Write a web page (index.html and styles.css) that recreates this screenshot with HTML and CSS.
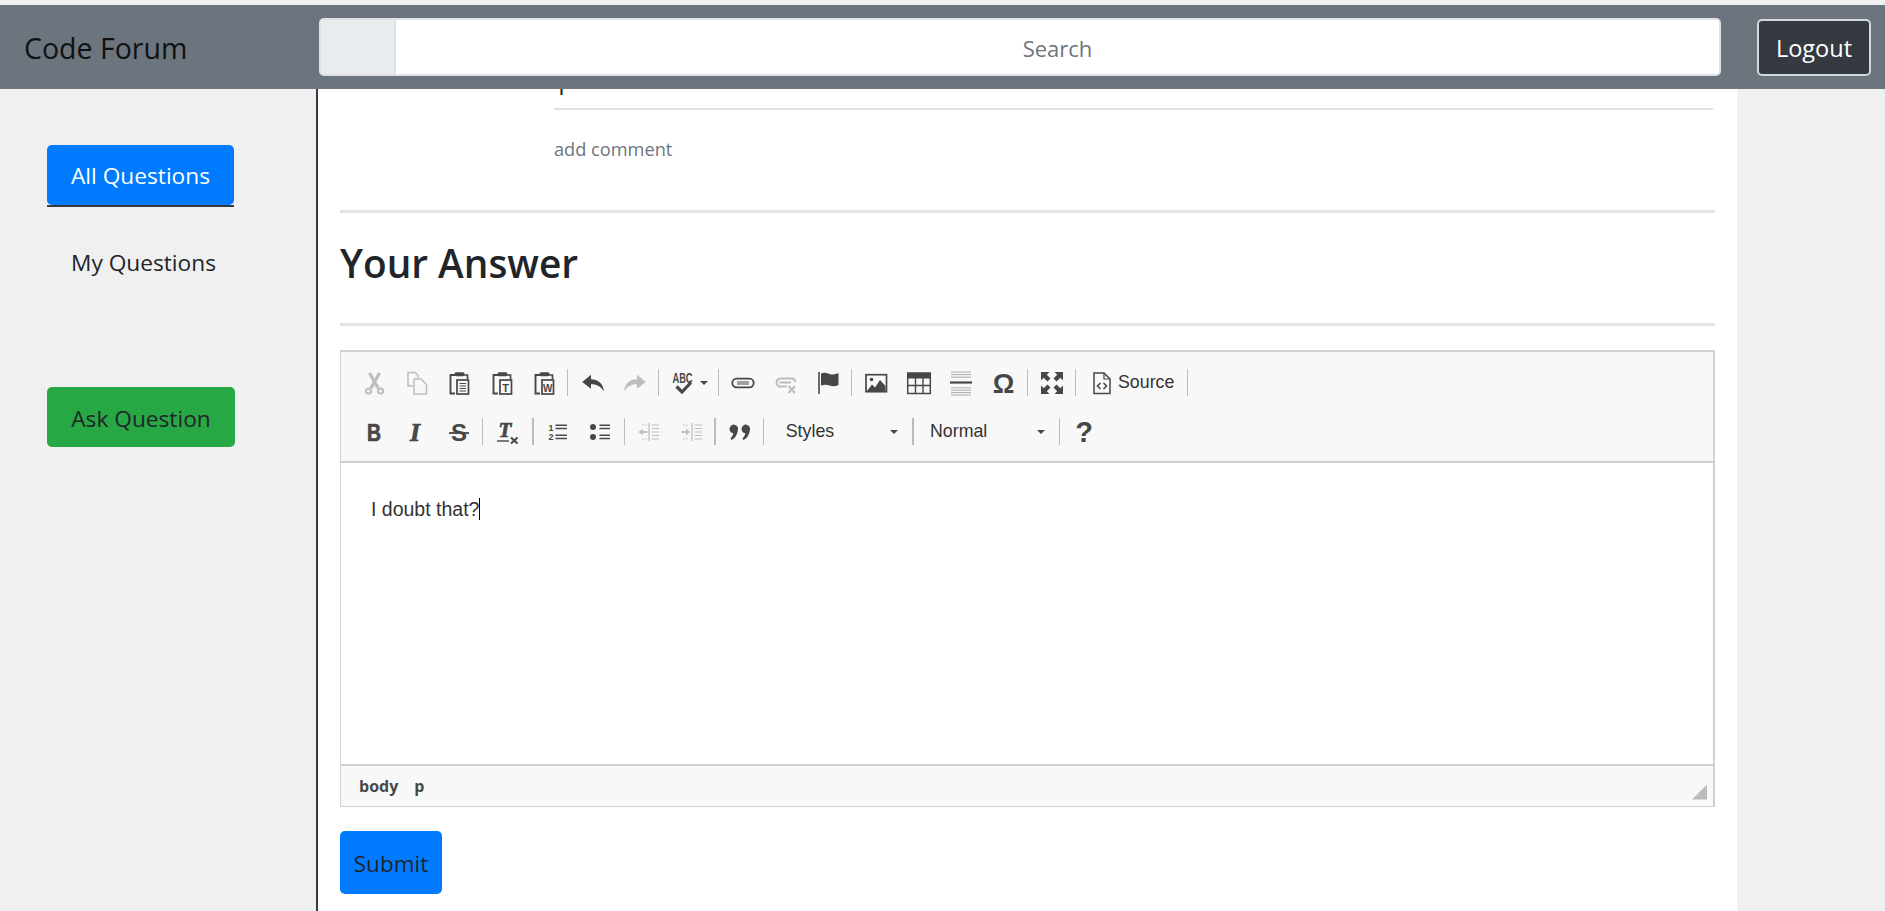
FILE: index.html
```html
<!DOCTYPE html>
<html lang="en">
<head>
<meta charset="utf-8">
<title>Code Forum</title>
<link rel="stylesheet" href="styles.css">
</head>
<body>
<svg class="defs" width="0" height="0" aria-hidden="true">
  <defs>
    <symbol id="clip" viewBox="0 0 24 24">
      <path d="M8 4H3.5V22.5H8" fill="none" stroke="currentColor" stroke-width="1.9"/>
      <rect x="7.5" y="1.2" width="10" height="4" rx="1.6" fill="currentColor"/>
      <path d="M17 4H20.5V8" fill="none" stroke="currentColor" stroke-width="1.7"/>
      <rect x="10" y="9" width="11.5" height="14" fill="none" stroke="currentColor" stroke-width="1.7"/>
    </symbol>
  </defs>
</svg>
<header class="navbar">
  <div class="brand">Code Forum</div>
  <form class="search">
    <span class="search-addon"></span>
    <input class="search-input" type="text" placeholder="Search">
  </form>
  <button class="logout" type="button">Logout</button>
</header>
<div class="page">
  <aside class="sidebar">
    <div class="side-item"><a class="side-btn side-active">All Questions</a></div>
    <a class="side-link">My Questions</a>
    <a class="side-btn side-ask">Ask Question</a>
  </aside>
  <main class="content">
    <div class="comments">
      <div class="tick"></div>
      <hr class="rule-thin">
      <a class="add-comment">add comment</a>
    </div>
    <hr class="rule">
    <h2 class="answer-title">Your Answer</h2>
    <hr class="rule">
    <section class="editor">
      <div class="toolbar">
        <div class="tb-row">
          <span class="tb off"><svg class="ic" viewBox="0 0 24 24"><path d="M7.5 2L16 17M17.5 2L9 17" stroke="currentColor" stroke-width="3.2" fill="none"/><circle cx="6.5" cy="20" r="2.6" stroke="currentColor" stroke-width="2" fill="none"/><circle cx="18.5" cy="20" r="2.6" stroke="currentColor" stroke-width="2" fill="none"/></svg></span>
          <span class="tb off"><svg class="ic" viewBox="0 0 24 24"><path d="M8 15H3V1.5H10L13 4.5V7M9 8H16L21.5 13.5V23H9Z" stroke="currentColor" stroke-width="1.5" fill="none"/></svg></span>
          <span class="tb"><svg class="ic" viewBox="0 0 24 24"><use href="#clip"/><path d="M12.5 12.5H19M12.5 15H19M12.5 17.5H19M12.5 20H19" stroke="currentColor" stroke-width="1.2"/></svg></span>
          <span class="tb"><svg class="ic" viewBox="0 0 24 24"><use href="#clip"/><text class="ic-t ic-b" x="15.7" y="20.5" font-size="11" text-anchor="middle">T</text></svg></span>
          <span class="tb"><svg class="ic" viewBox="0 0 24 24"><use href="#clip"/><text class="ic-t ic-b" x="15.7" y="20.5" font-size="10" text-anchor="middle">W</text></svg></span>
          <i class="sep"></i>
          <span class="tb"><svg class="ic" viewBox="0 0 24 24"><path d="M10 3.7L1.2 11L10 17.8V13.3C15 13.3 19 14.8 23 20.3C22.3 12.5 17 8.2 10 8.2Z" fill="currentColor"/></svg></span>
          <span class="tb off"><svg class="ic" viewBox="0 0 24 24"><path d="M14 3.7L22.8 11L14 17.8V13.3C9 13.3 5 14.8 1 20.3C1.7 12.5 7 8.2 14 8.2Z" fill="currentColor"/></svg></span>
          <i class="sep"></i>
          <span class="tb tb-spell"><svg class="ic" viewBox="0 0 24 24"><text class="ic-t ic-b" x="11.5" y="12" font-size="15" text-anchor="middle" textLength="20" lengthAdjust="spacingAndGlyphs">ABC</text><path d="M5.5 15.5L11 21L20 11.5" stroke="currentColor" stroke-width="3.2" fill="none"/></svg><b class="caret"></b></span>
          <i class="sep"></i>
          <span class="tb"><svg class="ic" viewBox="0 0 24 24"><rect x="1.3" y="7.7" width="21.4" height="8.6" rx="4.3" stroke="currentColor" stroke-width="1.8" fill="none"/><path d="M6 11H18M6 13H18" stroke="currentColor" stroke-width="1.2"/></svg></span>
          <span class="tb off"><svg class="ic" viewBox="0 0 24 24"><path d="M13 15.5H5.5A4.2 4.2 0 0 1 5.5 7.5H17.5A4.2 4.2 0 0 1 21.5 11M5.5 11.5H17" stroke="currentColor" stroke-width="1.9" fill="none"/><path d="M14.5 15L21 22M21 15L14.5 22" stroke="currentColor" stroke-width="2"/></svg></span>
          <span class="tb"><svg class="ic" viewBox="0 0 24 24"><path d="M3 1V23" stroke="currentColor" stroke-width="1.6"/><path d="M5 2.5C8 1 11 2 13.5 3C16 4 19 3.5 22.5 2V14C19 15.5 16 15.5 13.5 14.5C11 13.5 8 13.5 5 14.5Z" fill="currentColor"/></svg></span>
          <i class="sep"></i>
          <span class="tb"><svg class="ic" viewBox="0 0 24 24"><rect x="2" y="3.7" width="20.5" height="17" stroke="currentColor" stroke-width="1.7" fill="none"/><path d="M3 20L8 13.5L11 16.5L16 9L21.5 15V20Z" fill="currentColor"/><circle cx="7.5" cy="8.5" r="1.8" fill="currentColor"/></svg></span>
          <span class="tb"><svg class="ic" viewBox="0 0 24 24"><rect x="0.7" y="2" width="22.6" height="20.5" stroke="currentColor" stroke-width="1.5" fill="none"/><rect x="0.7" y="2" width="22.6" height="5.5" fill="currentColor"/><path d="M8.5 7V22M16 7V22M1 14.5H23" stroke="currentColor" stroke-width="1.4"/></svg></span>
          <span class="tb"><svg class="ic" viewBox="0 0 24 24"><path d="M2 1H22M2 3.6H22M2 6.2H22M2 16.8H22M2 19.2H22M2 21.6H22M2 24H22" stroke="currentColor" stroke-width=".8" opacity=".55"/><path d="M1 11.5H23" stroke="currentColor" stroke-width="2.2"/></svg></span>
          <span class="tb"><svg class="ic" viewBox="0 0 24 24"><text class="ic-t ic-b" x="11.5" y="22" font-size="27" text-anchor="middle">Ω</text></svg></span>
          <i class="sep"></i>
          <span class="tb"><svg class="ic" viewBox="0 0 24 24"><path d="M1 1H9.5L6.8 3.7L10.5 7.5L7.5 10.5L3.7 6.8L1 9.5Z" fill="currentColor"/><path d="M23 1H14.5L17.2 3.7L13.5 7.5L16.5 10.5L20.3 6.8L23 9.5Z" fill="currentColor"/><path d="M1 23H9.5L6.8 20.3L10.5 16.5L7.5 13.5L3.7 17.2L1 14.5Z" fill="currentColor"/><path d="M23 23H14.5L17.2 20.3L13.5 16.5L16.5 13.5L20.3 17.2L23 14.5Z" fill="currentColor"/></svg></span>
          <i class="sep"></i>
          <span class="tb tb-source"><svg class="ic" viewBox="0 0 24 24"><path d="M4 2H14L20 8V22.5H4Z" stroke="currentColor" stroke-width="1.5" fill="none"/><path d="M14 2V8H20" stroke="currentColor" stroke-width="1.2" fill="none"/><path d="M10.5 12L7.5 15L10.5 18M13.5 12L16.5 15L13.5 18" stroke="currentColor" stroke-width="1.6" fill="none"/></svg><span class="tb-label">Source</span></span>
          <i class="sep"></i>
        </div>
        <div class="tb-row">
          <span class="tb"><svg class="ic" viewBox="0 0 24 24"><text class="ic-t ic-b ic-heavy" x="12" y="20.5" font-size="24" text-anchor="middle" textLength="14" lengthAdjust="spacingAndGlyphs">B</text></svg></span>
          <span class="tb"><svg class="ic" viewBox="0 0 24 24"><text class="ic-s ic-heavy" x="10" y="21" font-size="26" text-anchor="middle">I</text></svg></span>
          <span class="tb"><svg class="ic" viewBox="0 0 24 24"><text class="ic-t ic-b" x="12" y="21" font-size="24" text-anchor="middle">S</text><path d="M2 13H22" stroke="currentColor" stroke-width="1.8"/></svg></span>
          <i class="sep"></i>
          <span class="tb tb-tx"><svg class="ic" viewBox="0 0 24 24"><text class="ic-s ic-heavy" x="9" y="17" font-size="21" text-anchor="middle">T</text><path d="M1 21H13" stroke="currentColor" stroke-width="1.4"/><path d="M15 17.5L21.5 23.5M21.5 17.5L15 23.5" stroke="currentColor" stroke-width="2"/></svg></span>
          <i class="sep"></i>
          <span class="tb tb-wide tb-list-first"><svg class="ic" viewBox="0 0 24 24"><text class="ic-t ic-b" x="7" y="10.5" font-size="9" text-anchor="middle">1</text><text class="ic-t ic-b" x="7" y="20" font-size="9" text-anchor="middle">2</text><path d="M11.5 5.3H23M11.5 8.5H23M11.5 15.3H23M11.5 18.5H23" stroke="currentColor" stroke-width="1.5"/></svg></span>
          <span class="tb tb-wide"><svg class="ic" viewBox="0 0 24 24"><circle cx="5" cy="7" r="3" fill="currentColor"/><circle cx="5" cy="17" r="3" fill="currentColor"/><path d="M11.5 5.3H22M11.5 8.5H22M11.5 15.3H22M11.5 18.5H22" stroke="currentColor" stroke-width="1.5"/></svg></span>
          <i class="sep"></i>
          <span class="tb off"><svg class="ic" viewBox="0 0 24 24"><path d="M12 3V21" stroke="currentColor" stroke-width="1.3"/><path d="M1.5 12L6 8.7V11H10.5V13H6V15.3Z" fill="currentColor"/><path d="M5 5H10M5 19H10" stroke="currentColor" stroke-width="1.2" stroke-dasharray="1.5 1.5"/><path d="M14.5 5H22M14.5 8.5H22M14.5 12H22M14.5 15.5H22M14.5 19H22" stroke="currentColor" stroke-width="1.2"/></svg></span>
          <span class="tb off"><svg class="ic" viewBox="0 0 24 24"><path d="M12 3V21" stroke="currentColor" stroke-width="1.3"/><path d="M10.5 12L6 8.7V11H1.5V13H6V15.3Z" fill="currentColor"/><path d="M3 5H8M3 19H8" stroke="currentColor" stroke-width="1.2" stroke-dasharray="1.5 1.5"/><path d="M14.5 5H22M14.5 8.5H22M14.5 12H22M14.5 15.5H22M14.5 19H22" stroke="currentColor" stroke-width="1.2"/></svg></span>
          <i class="sep"></i>
          <span class="tb"><svg class="ic" viewBox="0 0 24 24"><path d="M1.5 9A4.3 4.3 0 1 1 9.8 10.5C9.3 14.5 7 18.5 3.5 20L2.5 18.5C4 17 5 15.3 5.3 13.3C3 13 1.5 11.3 1.5 9Z" fill="currentColor"/><path d="M13.5 9A4.3 4.3 0 1 1 21.8 10.5C21.3 14.5 19 18.5 15.5 20L14.5 18.5C16 17 17 15.3 17.3 13.3C15 13 13.5 11.3 13.5 9Z" fill="currentColor"/></svg></span>
          <i class="sep"></i>
          <span class="combo combo-styles"><span>Styles</span><b class="caret"></b></span>
          <i class="sep"></i>
          <span class="combo combo-format"><span>Normal</span><b class="caret"></b></span>
          <i class="sep"></i>
          <span class="tb"><svg class="ic" viewBox="0 0 24 24"><text class="ic-t ic-b" x="12" y="22" font-size="29" text-anchor="middle">?</text></svg></span>
        </div>
      </div>
      <div class="editor-body"><p class="editor-text"><span class="typed">I doubt that?</span></p></div>
      <div class="pathbar">
        <span class="path-items"><span>body</span><span>p</span></span>
        <i class="resizer"></i>
      </div>
    </section>
    <button class="submit" type="button">Submit</button>
  </main>
  <div class="gutter"></div>
</div>
</body>
</html>
```

FILE: styles.css
```css
* { box-sizing: border-box; }
html, body { margin: 0; height: 100%; }
body {
  height: 911px;
  overflow: hidden;
  display: flex;
  flex-direction: column;
  padding-top: 5px;
  background: #f0f0f0;
  font-family: "Open Sans", "Noto Sans", sans-serif;
  color: #212529;
}
.defs { position: absolute; }

.navbar {
  flex: none;
  height: 84px;
  display: flex;
  align-items: center;
  background: #6c757d;
  padding: 0 14px 0 24px;
}
.brand { width: 295px; padding-top: 1px; font-size: 28.5px; color: #111; }
.search {
  width: 1402px;
  height: 58px;
  display: flex;
  border: 2px solid #dee2e6;
  border-radius: 5px;
  overflow: hidden;
  background: #fff;
}
.search-addon { width: 75px; background: #e9ecef; border-right: 2px solid #dee2e6; }
.search-input {
  flex: 1;
  border: 0;
  outline: 0;
  padding: 2px 0 0;
  text-align: center;
  font: 22px "Open Sans", sans-serif;
  color: #495057;
}
.search-input::placeholder { color: #6c757d; opacity: 1; }
.logout {
  margin-left: 36px;
  width: 114px;
  height: 57px;
  background: #343a40;
  color: #fff;
  border: 2px solid #d5d8db;
  border-radius: 5px;
  font: 23.5px "Open Sans", sans-serif;
  padding: 1px 0 0;
}

.page { flex: 1; display: flex; min-height: 0; }
.sidebar {
  flex: none;
  width: 318px;
  border-right: 2px solid #343a40;
  padding: 56px 0 0 47px;
  display: flex;
  flex-direction: column;
  align-items: flex-start;
  font-size: 22.7px;
}
.side-item { border-bottom: 2px solid #343a40; }
.side-btn {
  display: flex;
  align-items: center;
  justify-content: center;
  width: 188px;
  height: 60px;
  padding-top: 1px;
  border-radius: 5px;
}
.side-active { background: #007bff; color: #fff; width: 187px; }
.side-link { margin: 37px 0 0 24px; height: 38px; line-height: 38px; color: #212529; }
.side-ask { margin-top: 105px; padding-top: 2px; background: #28a745; color: #212529; }

.content {
  flex: none;
  width: 1419px;
  background: #fff;
  padding: 0 22px;
  overflow: hidden;
}
.gutter { flex: 1; }

.comments { margin-left: 214px; }
.tick {
  width: 3px;
  height: 6px;
  margin-left: 6px;
  background: linear-gradient(90deg, #c8801e 0 33%, #2a2a3a 33% 66%, #3a8ee6 66%);
}
.rule-thin { margin: 13px 0 0; border: 0; height: 2px; background: #dee2e6; width: 1159px; }
.add-comment { display: block; margin-top: 27px; font-size: 18.2px; line-height: 24px; color: #6c757d; }
.rule { margin: 0; border: 0; height: 3px; background: #e3e4e5; }
.comments + .rule { margin-top: 49px; }
.answer-title {
  margin: 0;
  height: 110px;
  line-height: 100px;
  font-size: 38.8px;
  font-weight: 600;
  color: #212529;
}

.editor {
  margin-top: 24px;
  height: 457px;
  display: flex;
  flex-direction: column;
  border: 2px solid #d1d1d1;
  border-bottom-width: 1px;
  border-left-width: 1px;
}
.toolbar {
  flex: none;
  height: 111px;
  padding: 6px 0 6px 12px;
  background: #f8f8f8;
  border-bottom: 2px solid #d1d1d1;
  color: #474747;
}
.tb-row { height: 49px; display: flex; align-items: center; }
.tb { flex: none; width: 42.5px; height: 36px; display: flex; align-items: center; justify-content: center; }
.tb.off { color: #bdbdbd; }
.tb-wide { width: 43.75px; }
.tb-list-first { margin-left: -2px; }
.tb-tx { width: 44.5px; padding-right: 2px; }
.tb-spell { width: 54px; padding-left: 9px; justify-content: flex-start; }
.tb-spell .caret { margin-left: 5px; }
.tb-source { width: 106.5px; padding-left: 11px; justify-content: flex-start; }
.tb-label { margin-left: 4px; font: 17.8px "Liberation Sans", sans-serif; color: #333; }
.ic { width: 24px; height: 24px; flex: none; overflow: visible; }
.ic-t { font-family: "Liberation Sans", sans-serif; fill: currentColor; }
.ic-b { font-weight: 700; }
.ic-s { font-family: "Liberation Serif", serif; font-weight: 700; font-style: italic; fill: currentColor; }
.ic-heavy { stroke: currentColor; stroke-width: .7px; }
.sep { flex: none; width: 1.25px; height: 27px; margin: 0 3px 0 1.5px; background: #bcbcbc; }
.caret {
  width: 0;
  height: 0;
  border-left: 4px solid transparent;
  border-right: 4px solid transparent;
  border-top: 4px solid #474747;
}
.combo {
  flex: none;
  height: 36px;
  display: flex;
  align-items: center;
  justify-content: space-between;
  font: 17.8px "Liberation Sans", sans-serif;
  color: #333;
}
.combo-styles { width: 144px; padding: 0 13px 0 19px; }
.combo-format { width: 140.75px; padding: 0 12.5px 0 13.5px; }

.editor-body { flex: 1; background: #fff; padding: 34px 0 0 30px; }
.editor-text { margin: 0; font: 19.5px/24px "Liberation Sans", sans-serif; color: #333; }
.typed { border-right: 1px solid #000; }
.pathbar {
  flex: none;
  height: 42px;
  background: #f8f8f8;
  border-top: 2px solid #d1d1d1;
  display: flex;
  align-items: center;
  justify-content: space-between;
  padding: 0 6px 0 18px;
}
.path-items { display: flex; gap: 16px; margin-top: -1px; font-size: 16px; font-weight: 700; color: #484848; }
.resizer {
  width: 15px;
  height: 15px;
  margin-top: 12px;
  background: #bcbcbc;
  clip-path: polygon(100% 0, 100% 100%, 0 100%);
}
.submit {
  display: block;
  margin-top: 24px;
  width: 102px;
  height: 63px;
  border: 0;
  border-radius: 5px;
  background: #007bff;
  color: #212529;
  font: 22.5px "Open Sans", sans-serif;
  padding: 2px 0 0;
}
```
